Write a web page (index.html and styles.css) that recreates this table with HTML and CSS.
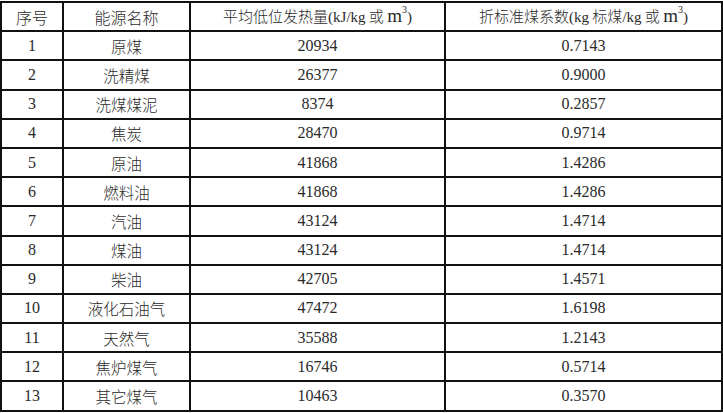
FILE: index.html
```html
<!DOCTYPE html>
<html lang="zh">
<head>
<meta charset="utf-8">
<title>能源折标准煤系数</title>
<link rel="stylesheet" href="styles.css">
</head>
<body>
<table class="grid">
  <colgroup>
    <col class="c1"><col class="c2"><col class="c3"><col class="c4">
  </colgroup>
  <thead>
    <tr>
      <th>序号</th>
      <th>能源名称</th>
      <th>平均低位发热量<span class="lat">(kJ/kg</span> 或 <span class="m">m</span><sup>3</sup><span class="lat">)</span></th>
      <th>折标准煤系数<span class="lat">(kg</span> 标煤<span class="lat">/kg</span> 或 <span class="m">m</span><sup>3</sup><span class="lat">)</span></th>
    </tr>
  </thead>
  <tbody>
    <tr><td>1</td><td class="zh">原煤</td><td>20934</td><td>0.7143</td></tr>
    <tr><td>2</td><td class="zh">洗精煤</td><td>26377</td><td>0.9000</td></tr>
    <tr><td>3</td><td class="zh">洗煤煤泥</td><td>8374</td><td>0.2857</td></tr>
    <tr><td>4</td><td class="zh">焦炭</td><td>28470</td><td>0.9714</td></tr>
    <tr><td>5</td><td class="zh">原油</td><td>41868</td><td>1.4286</td></tr>
    <tr><td>6</td><td class="zh">燃料油</td><td>41868</td><td>1.4286</td></tr>
    <tr><td>7</td><td class="zh">汽油</td><td>43124</td><td>1.4714</td></tr>
    <tr><td>8</td><td class="zh">煤油</td><td>43124</td><td>1.4714</td></tr>
    <tr><td>9</td><td class="zh">柴油</td><td>42705</td><td>1.4571</td></tr>
    <tr><td>10</td><td class="zh">液化石油气</td><td>47472</td><td>1.6198</td></tr>
    <tr><td>11</td><td class="zh">天然气</td><td>35588</td><td>1.2143</td></tr>
    <tr><td>12</td><td class="zh">焦炉煤气</td><td>16746</td><td>0.5714</td></tr>
    <tr><td>13</td><td class="zh">其它煤气</td><td>10463</td><td>0.3570</td></tr>
  </tbody>
</table>
</body>
</html>
```
FILE: styles.css
```css
html, body {
  margin: 0;
  padding: 0;
  background: #ffffff;
}
body {
  padding-top: 1px;
}
.grid {
  border-collapse: collapse;
  table-layout: fixed;
  width: 721px;
  font-family: "Liberation Serif", "Noto Sans CJK SC", serif;
  font-size: 16px;
  color: #2a2a2a;
}
.c1 { width: 62px; }
.c2 { width: 127px; }
.c3 { width: 255px; }
.c4 { width: 277px; }
.grid th,
.grid td {
  border: 2px solid #111;
  height: 27.2px;
  padding: 0;
  text-align: center;
  vertical-align: middle;
  font-weight: normal;
  line-height: 18px;
}
.grid th {
  font-family: "Noto Sans CJK SC", sans-serif;
  font-weight: 300;
  font-size: 15px;
  white-space: nowrap;
}
.grid th:first-child,
.grid th:nth-child(2) {
  font-size: 16px;
}
.grid .zh {
  font-family: "Noto Sans CJK SC", sans-serif;
  font-weight: 300;
  font-size: 15.5px;
}
.lat {
  font-family: "Liberation Serif", serif;
  font-size: 15px;
}
.m {
  font-family: "Liberation Serif", serif;
  font-size: 19px;
}
sup {
  font-family: "Liberation Serif", serif;
  font-size: 10px;
  vertical-align: 9px;
  line-height: 0;
}
```
